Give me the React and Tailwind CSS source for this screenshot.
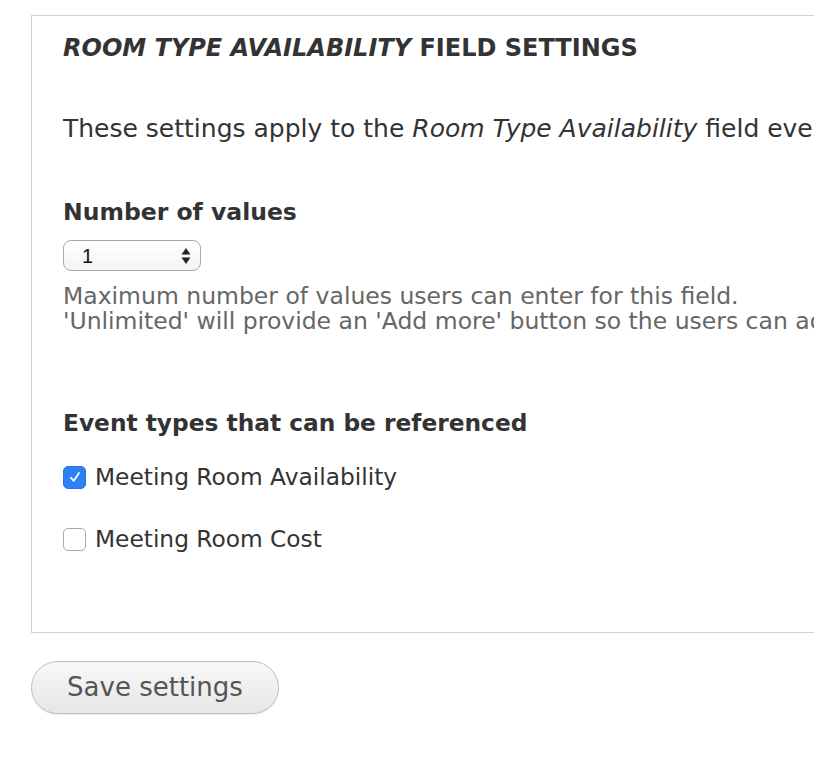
import React from "react";

export default function App() {
  const font = { fontFamily: '"DejaVu Sans", "Lucida Grande", Verdana, sans-serif' };
  return (
    <div className="w-[814px] h-[770px] bg-white overflow-hidden text-[#333]" style={font}>
      <div className="pt-[15px] pl-[31px]">
        <div className="w-[820px] h-[618px] border border-r-0 border-[#cfcfcf] pl-[31px] pt-[17px]">
          <div className="h-[30px] leading-[30px] text-[24px] font-bold whitespace-nowrap">
            <em>ROOM TYPE AVAILABILITY</em> FIELD SETTINGS
          </div>
          <div className="mt-[51px] h-[30px] leading-[30px] text-[25px] whitespace-nowrap">
            These settings apply to the <em>Room Type Availability</em> field everywhere it is used.
          </div>
          <div className="mt-[53px] h-[30px] leading-[30px] text-[23.5px] font-bold whitespace-nowrap">
            Number of values
          </div>
          <div className="mt-[13px] w-[138px] h-[31px] rounded-[8px] border border-[#a8a8a8] bg-gradient-to-b from-white to-[#f4f4f4] flex items-center justify-between pl-[18px] pr-[9px]">
            <span className="text-[20px] leading-none text-[#111]" style={{ fontFamily: '"Liberation Sans", Arial, sans-serif' }}>1</span>
            <svg width="10" height="18" viewBox="0 0 10 18">
              <path d="M5 1 L9.5 7.5 L0.5 7.5 Z" fill="#222" />
              <path d="M5 17 L9.5 10.5 L0.5 10.5 Z" fill="#222" />
            </svg>
          </div>
          <div className="mt-[13px] text-[23.5px] leading-[25px] text-[#666] whitespace-nowrap">
            <div>Maximum number of values users can enter for this field.</div>
            <div>'Unlimited' will provide an 'Add more' button so the users can add as many values as they like.</div>
          </div>
          <div className="mt-[74px] h-[30px] leading-[30px] text-[23.3px] font-bold whitespace-nowrap">
            Event types that can be referenced
          </div>
          <div className="mt-[24px] h-[30px] flex items-center gap-[9px]">
            <span className="w-[23px] h-[23px] rounded-[5px] bg-[#2e80f5] border border-[#2a74e0] flex items-center justify-center">
              <svg width="14" height="14" viewBox="0 0 14 14">
                <path d="M3 7.8 L5.8 10.8 L11 3" fill="none" stroke="white" strokeWidth="1.8" strokeLinecap="round" strokeLinejoin="round" />
              </svg>
            </span>
            <span className="text-[23.3px] leading-[30px] whitespace-nowrap">Meeting Room Availability</span>
          </div>
          <div className="mt-[32px] h-[30px] flex items-center gap-[9px]">
            <span className="w-[23px] h-[23px] rounded-[5px] bg-white border border-[#a8a8a8]" />
            <span className="text-[23.3px] leading-[30px] whitespace-nowrap">Meeting Room Cost</span>
          </div>
        </div>
        <button className="mt-[28px] w-[248px] h-[53px] rounded-full border border-[#bdbdbd] bg-gradient-to-b from-[#f8f8f8] to-[#e6e6e6] text-[26px] text-[#555] shadow-[0_1px_1px_rgba(0,0,0,0.08)]">
          Save settings
        </button>
      </div>
    </div>
  );
}
